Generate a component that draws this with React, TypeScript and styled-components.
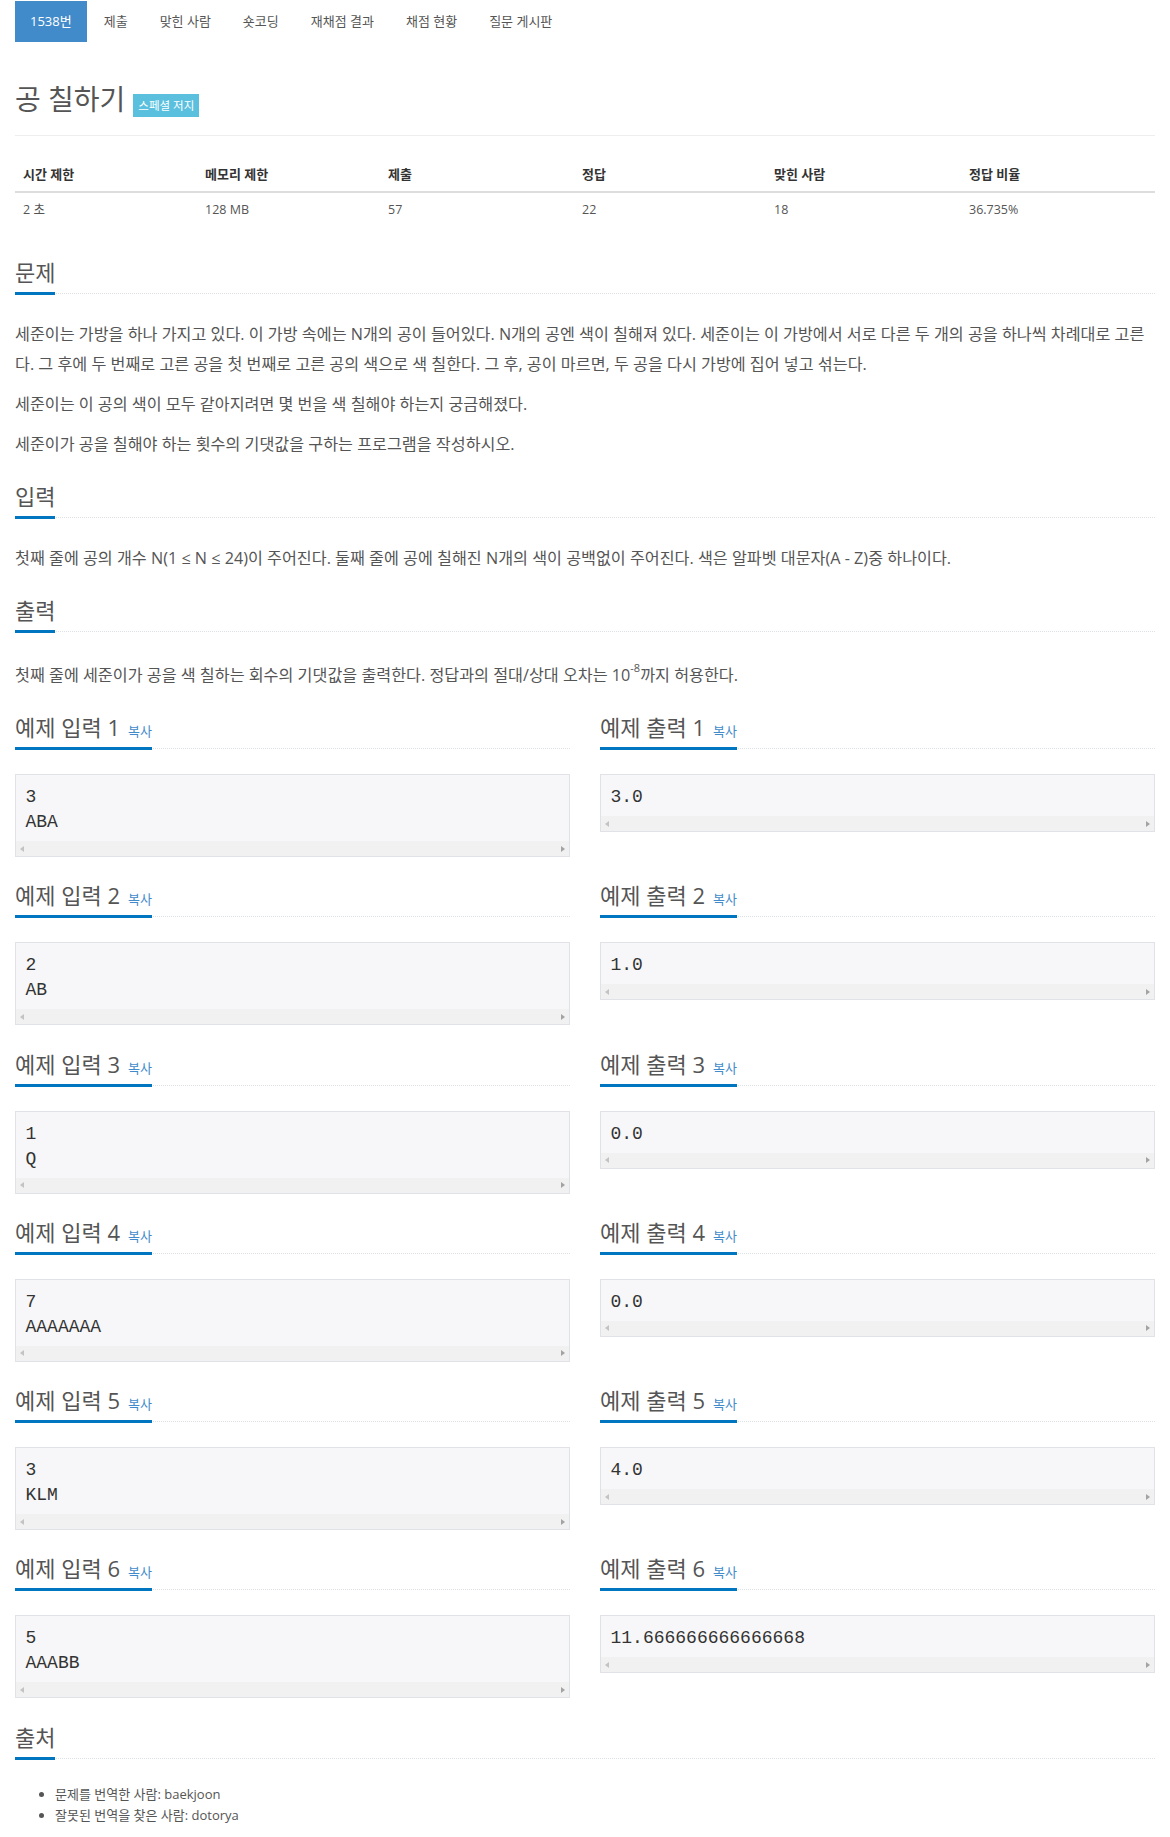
import React from 'react';
import styled, { createGlobalStyle } from 'styled-components';

const GlobalStyle = createGlobalStyle`
  html, body { margin: 0; padding: 0; background: #ffffff; }
  body {
    font-family: "Open Sans", "Noto Sans CJK KR", sans-serif;
    color: #555555;
  }
  * { box-sizing: border-box; }
`;

const Page = styled.div`
  width: 1170px;
  padding: 1px 15px 20px;
  display: flex;
  flex-direction: column;
`;

const Nav = styled.ul`
  display: flex;
  gap: 2px;
  list-style: none;
  margin: 0;
  padding: 0;
`;

const NavItem = styled.li<{ $active?: boolean }>`
  font-size: 13px;
  line-height: 21px;
  padding: 10px 15px;
  color: ${(p) => (p.$active ? '#ffffff' : '#555555')};
  background: ${(p) => (p.$active ? '#428bca' : 'transparent')};
  white-space: nowrap;
`;

const PageHeader = styled.div`
  margin-top: 39px;
  padding-bottom: 18px;
  border-bottom: 1px solid #eeeeee;
  display: flex;
  align-items: flex-end;
`;

const Title = styled.h1`
  margin: 0;
  font-size: 28px;
  line-height: 36px;
  font-weight: normal;
  color: #555555;
`;

const Badge = styled.span`
  margin-left: 8px;
  font-size: 11.5px;
  line-height: 12px;
  padding: 6px 5px 5px;
  background: #5bc0de;
  color: #ffffff;
  white-space: nowrap;
`;

const InfoTable = styled.table`
  margin-top: 22px;
  margin-bottom: 19px;
  width: 1140px;
  border-collapse: collapse;
  table-layout: fixed;
`;

const Th = styled.th<{ $w: number }>`
  width: ${(p) => p.$w}px;
  padding: 8px;
  font-size: 13px;
  line-height: 17px;
  font-weight: bold;
  color: #333333;
  text-align: left;
  border-bottom: 2px solid #dddddd;
`;

const Td = styled.td`
  padding: 8px;
  font-size: 12.5px;
  line-height: 17px;
  color: #555555;
`;

const Section = styled.section`
  display: flex;
  flex-direction: column;
`;

const Headline = styled.div`
  display: flex;
  align-items: flex-end;
  margin: 12px 0 25px;
  border-bottom: 1px dotted #dde1e6;
`;

const H2 = styled.h2`
  margin: 0 0 -2px;
  padding-bottom: 5px;
  font-size: 22px;
  line-height: 30px;
  font-weight: normal;
  color: #555555;
  border-bottom: 3px solid #0076c0;
  white-space: nowrap;
`;

const CopyLink = styled.a`
  margin-left: 8px;
  font-size: 13px;
  line-height: 13px;
  color: #428bca;
  text-decoration: none;
`;

const Paragraph = styled.p`
  margin: 0 0 10px;
  font-size: 16.2px;
  line-height: 30px;
  color: #555555;
`;

const Sup = styled.sup`
  font-size: 11px;
  line-height: 21px;
  vertical-align: 9px;
`;

const SampleRow = styled.div`
  display: grid;
  grid-template-columns: 555px 555px;
  column-gap: 30px;
  align-items: start;
`;

const SampleCol = styled.div`
  display: flex;
  flex-direction: column;
`;

const SampleBox = styled.div`
  margin-bottom: 11.3px;
  border: 1px solid #e1e1e8;
  background: #f7f7f9;
  display: flex;
  flex-direction: column;
`;

const SampleText = styled.pre`
  margin: 0;
  padding: 10px 9.5px 6px;
  font-family: "Liberation Mono", "DejaVu Sans Mono", monospace;
  font-size: 18px;
  line-height: 25px;
  color: #333333;
  white-space: pre;
`;

const ScrollBar = styled.div`
  height: 15px;
  background: #f1f1f1;
  display: flex;
  align-items: center;
  justify-content: space-between;
  padding: 0 4px;
`;

const Arrow = styled.span<{ $dir: 'left' | 'right' }>`
  width: 0;
  height: 0;
  border-top: 3.5px solid transparent;
  border-bottom: 3.5px solid transparent;
  ${(p) =>
    p.$dir === 'left'
      ? 'border-right: 4px solid #c3c3c3;'
      : 'border-left: 4px solid #a3a3a3;'}
`;

const SourceList = styled.ul`
  margin: 0;
  padding-left: 40px;
  font-size: 13px;
  line-height: 21px;
  color: #555555;
`;

const navItems = ['1538번', '제출', '맞힌 사람', '숏코딩', '재채점 결과', '채점 현황', '질문 게시판'];

const info = [
  { head: '시간 제한', value: '2 초', w: 182 },
  { head: '메모리 제한', value: '128 MB', w: 183 },
  { head: '제출', value: '57', w: 194 },
  { head: '정답', value: '22', w: 192 },
  { head: '맞힌 사람', value: '18', w: 195 },
  { head: '정답 비율', value: '36.735%', w: 194 },
];

const samples = [
  { n: 1, input: '3\nABA', output: '3.0' },
  { n: 2, input: '2\nAB', output: '1.0' },
  { n: 3, input: '1\nQ', output: '0.0' },
  { n: 4, input: '7\nAAAAAAA', output: '0.0' },
  { n: 5, input: '3\nKLM', output: '4.0' },
  { n: 6, input: '5\nAAABB', output: '11.666666666666668' },
];

const Heading: React.FC<{ children: React.ReactNode; copy?: boolean }> = ({ children, copy }) => (
  <Headline>
    <H2>
      {children}
      {copy && <CopyLink href="#">복사</CopyLink>}
    </H2>
  </Headline>
);

const Sample: React.FC<{ title: string; text: string }> = ({ title, text }) => (
  <SampleCol>
    <Heading copy>{title}</Heading>
    <SampleBox>
      <SampleText>{text}</SampleText>
      <ScrollBar>
        <Arrow $dir="left" />
        <Arrow $dir="right" />
      </ScrollBar>
    </SampleBox>
  </SampleCol>
);

export default function App() {
  return (
    <>
      <GlobalStyle />
      <Page>
        <Nav>
          {navItems.map((item, i) => (
            <NavItem key={item} $active={i === 0}>
              {item}
            </NavItem>
          ))}
        </Nav>

        <PageHeader>
          <Title>공 칠하기</Title>
          <Badge>스페셜 저지</Badge>
        </PageHeader>

        <InfoTable>
          <thead>
            <tr>
              {info.map((c) => (
                <Th key={c.head} $w={c.w}>
                  {c.head}
                </Th>
              ))}
            </tr>
          </thead>
          <tbody>
            <tr>
              {info.map((c) => (
                <Td key={c.head}>{c.value}</Td>
              ))}
            </tr>
          </tbody>
        </InfoTable>

        <Section>
          <Heading>문제</Heading>
          <Paragraph>
            세준이는 가방을 하나 가지고 있다. 이 가방 속에는 N개의 공이 들어있다. N개의 공엔 색이 칠해져 있다. 세준이는 이 가방에서 서로 다른 두 개의 공을 하나씩 차례대로 고른다. 그 후에 두 번째로 고른 공을 첫 번째로 고른 공의 색으로 색 칠한다. 그 후, 공이 마르면, 두 공을 다시 가방에 집어 넣고 섞는다.
          </Paragraph>
          <Paragraph>세준이는 이 공의 색이 모두 같아지려면 몇 번을 색 칠해야 하는지 궁금해졌다.</Paragraph>
          <Paragraph>세준이가 공을 칠해야 하는 횟수의 기댓값을 구하는 프로그램을 작성하시오.</Paragraph>
        </Section>

        <Section>
          <Heading>입력</Heading>
          <Paragraph>
            첫째 줄에 공의 개수 N(1 ≤ N ≤ 24)이 주어진다. 둘째 줄에 공에 칠해진 N개의 색이 공백없이 주어진다. 색은 알파벳 대문자(A - Z)중 하나이다.
          </Paragraph>
        </Section>

        <Section>
          <Heading>출력</Heading>
          <Paragraph>
            첫째 줄에 세준이가 공을 색 칠하는 회수의 기댓값을 출력한다. 정답과의 절대/상대 오차는 10<Sup>-8</Sup>까지 허용한다.
          </Paragraph>
        </Section>

        {samples.map((s) => (
          <SampleRow key={s.n}>
            <Sample title={`예제 입력 ${s.n}`} text={s.input} />
            <Sample title={`예제 출력 ${s.n}`} text={s.output} />
          </SampleRow>
        ))}

        <Section>
          <Heading>출처</Heading>
          <SourceList>
            <li>문제를 번역한 사람: baekjoon</li>
            <li>잘못된 번역을 찾은 사람: dotorya</li>
          </SourceList>
        </Section>
      </Page>
    </>
  );
}
